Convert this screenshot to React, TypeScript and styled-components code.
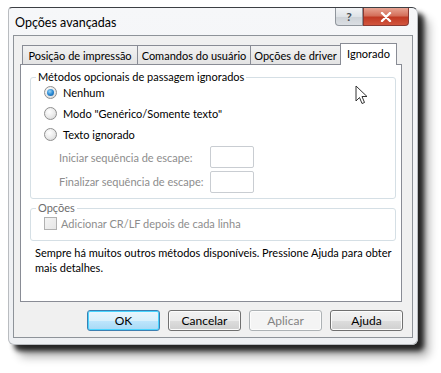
import React from "react";
import styled, { createGlobalStyle } from "styled-components";

const Global = createGlobalStyle`
  html, body { margin: 0; padding: 0; background: #ffffff; }
  body { font-family: Lato, "Noto Sans", sans-serif; font-size: 11px; color: #000; }
  * { box-sizing: border-box; }
`;

const Page = styled.div`
  width: 441px;
  height: 373px;
  padding: 7px 0 0 8px;
  position: relative;
  overflow: hidden;
`;

const Window = styled.div`
  width: 410px;
  height: 338px;
  background: linear-gradient(#f6f7f9, #eef0f3);
  border: 1px solid #b9bcc0;
  border-top: 1px solid #3c3f44;
  border-radius: 4px 6px 6px 6px;
  box-shadow: 6px 6px 5px rgba(0, 0, 0, 0.8), 11px 12px 10px rgba(0, 0, 0, 0.3);
  display: flex;
  flex-direction: column;
`;

const TitleBar = styled.div`
  height: 27px;
  display: flex;
  align-items: flex-start;
  justify-content: space-between;
  padding-left: 6px;
`;

const Title = styled.div`
  font-size: 12.5px;
  padding-top: 7px;
  color: #000;
`;

const Controls = styled.div`
  display: flex;
  margin-right: 8px;
`;

const CtlButton = styled.div<{ $close?: boolean }>`
  width: ${(p) => (p.$close ? 46 : 28)}px;
  height: 18px;
  display: flex;
  align-items: center;
  justify-content: center;
  border: 1px solid ${(p) => (p.$close ? "#8a3a33" : "#8f959c")};
  border-top: none;
  border-radius: ${(p) => (p.$close ? "0 0 4px 0" : "0 0 0 4px")};
  background: ${(p) =>
    p.$close
      ? "linear-gradient(#e8a493 0%, #d4705b 45%, #c13a24 55%, #d2553e 100%)"
      : "linear-gradient(#f2f4f6 0%, #dfe3e7 50%, #cdd2d7 51%, #dadee3 100%)"};
  color: ${(p) => (p.$close ? "#fff" : "#4a4f55")};
  font-size: 12px;
  font-weight: bold;
`;

const Client = styled.div`
  margin: 0 4px 6px 4px;
  flex: 1;
  background: #f0f0f0;
  border: 1px solid #8e9399;
  display: flex;
  flex-direction: column;
`;

const TabArea = styled.div`
  padding: 6px 10px 0 6px;
`;

const TabStrip = styled.div`
  display: flex;
  align-items: flex-end;
  height: 22px;
  padding-left: 3px;
`;

const Tab = styled.div<{ $w: number; $active?: boolean }>`
  width: ${(p) => p.$w}px;
  height: ${(p) => (p.$active ? 22 : 19)}px;
  display: flex;
  align-items: center;
  justify-content: center;
  border: 1px solid #898c95;
  border-bottom: none;
  margin-left: -1px;
  background: ${(p) => (p.$active ? "#ffffff" : "linear-gradient(#f2f2f2, #e3e3e3)")};
  position: relative;
  z-index: ${(p) => (p.$active ? 2 : 1)};
  margin-bottom: ${(p) => (p.$active ? -1 : 0)}px;
  padding-bottom: ${(p) => (p.$active ? 3 : 0)}px;
  white-space: nowrap;
`;

const TabPage = styled.div`
  height: 238px;
  background: #ffffff;
  border: 1px solid #898c95;
  padding: 6px 5px 0 9px;
  position: relative;
`;

const Group = styled.fieldset<{ $h: number }>`
  margin: 0;
  padding: 0 0 0 13px;
  height: ${(p) => p.$h}px;
  border: 1px solid #d5dfe5;
  border-radius: 3px;
  min-width: 0;
`;

const Legend = styled.legend<{ $disabled?: boolean }>`
  padding: 0 2px;
  margin-left: -8px;
  color: ${(p) => (p.$disabled ? "#6d6d6d" : "#000")};
  line-height: 12px;
`;

const Row = styled.div<{ $h: number; $indent?: number }>`
  height: ${(p) => p.$h}px;
  display: flex;
  align-items: center;
  padding-left: ${(p) => p.$indent || 0}px;
`;

const Radio = styled.span<{ $checked?: boolean }>`
  width: 13px;
  height: 13px;
  border-radius: 50%;
  border: 1px solid #8f8f8f;
  background: radial-gradient(circle at 40% 35%, #ffffff 0%, #e9e9e9 55%, #cfcfcf 100%);
  display: inline-flex;
  align-items: center;
  justify-content: center;
  margin-right: 6px;
  &::after {
    content: "";
    display: ${(p) => (p.$checked ? "block" : "none")};
    width: 7px;
    height: 7px;
    border-radius: 50%;
    background: radial-gradient(circle at 40% 35%, #9ad3f5 0%, #2a8ad4 50%, #10559a 100%);
  }
`;

const Check = styled.span`
  width: 13px;
  height: 13px;
  border: 1px solid #b1b1b1;
  background: linear-gradient(135deg, #f4f4f4, #e6e6e6);
  margin-right: 4px;
`;

const Label = styled.span<{ $disabled?: boolean }>`
  color: ${(p) => (p.$disabled ? "#8d8d8d" : "#000")};
  white-space: nowrap;
`;

const EscLabel = styled(Label)`
  width: 151px;
`;

const Input = styled.span`
  width: 44px;
  height: 22px;
  border: 1px solid #c9cdd2;
  border-radius: 2px;
  background: #fff;
`;

const Spacer = styled.div<{ $h: number }>`
  height: ${(p) => p.$h}px;
`;

const Note = styled.div`
  padding-left: 5px;
  line-height: 15px;
  width: 370px;
`;

const ButtonRow = styled.div`
  display: flex;
  justify-content: flex-end;
  gap: 8px;
  padding: 8px 9px 0 0;
`;

const Button = styled.div<{ $default?: boolean; $disabled?: boolean }>`
  width: 73px;
  height: 21px;
  display: flex;
  align-items: center;
  justify-content: center;
  border-radius: 3px;
  font-size: 12px;
  border: 1px solid ${(p) => (p.$default ? "#3c7fb1" : p.$disabled ? "#adb2b5" : "#707070")};
  background: ${(p) =>
    p.$disabled
      ? "#f4f4f4"
      : p.$default
      ? "linear-gradient(#eaf6fd 0%, #d9f0fc 50%, #bee6fd 51%, #a7d9f5 100%)"
      : "linear-gradient(#f2f2f2 0%, #ebebeb 50%, #dddddd 51%, #cfcfcf 100%)"};
  box-shadow: ${(p) => (p.$default ? "inset 0 0 0 1px #48d4ff" : "inset 0 0 0 1px #fcfcfc")};
  color: ${(p) => (p.$disabled ? "#838383" : "#000")};
`;

const Cursor = styled.svg`
  position: absolute;
  left: 334px;
  top: 20px;
`;

export default function App() {
  return (
    <>
      <Global />
      <Page>
        <Window>
          <TitleBar>
            <Title>Opções avançadas</Title>
            <Controls>
              <CtlButton>?</CtlButton>
              <CtlButton $close>
                <svg width="12" height="10" viewBox="0 0 12 10">
                  <path d="M2 1 L10 9 M10 1 L2 9" stroke="#fff" strokeWidth="2.4" strokeLinecap="round" />
                </svg>
              </CtlButton>
            </Controls>
          </TitleBar>
          <Client>
            <TabArea>
              <TabStrip>
                <Tab $w={116}>Posição de impressão</Tab>
                <Tab $w={114}>Comandos do usuário</Tab>
                <Tab $w={91}>Opções de driver</Tab>
                <Tab $w={57} $active>Ignorado</Tab>
              </TabStrip>
              <TabPage>
                <Group $h={128}>
                  <Legend>Métodos opcionais de passagem ignorados</Legend>
                  <Row $h={19}>
                    <Radio $checked />
                    <Label>Nenhum</Label>
                  </Row>
                  <Row $h={22}>
                    <Radio />
                    <Label>Modo "Genérico/Somente texto"</Label>
                  </Row>
                  <Row $h={21}>
                    <Radio />
                    <Label>Texto ignorado</Label>
                  </Row>
                  <Row $h={24} $indent={15}>
                    <EscLabel $disabled>Iniciar sequência de escape:</EscLabel>
                    <Input />
                  </Row>
                  <Row $h={25} $indent={15}>
                    <EscLabel $disabled>Finalizar sequência de escape:</EscLabel>
                    <Input />
                  </Row>
                </Group>
                <Spacer $h={3} />
                <Group $h={39}>
                  <Legend $disabled>Opções</Legend>
                  <Row $h={18}>
                    <Check />
                    <Label $disabled>Adicionar CR/LF depois de cada linha</Label>
                  </Row>
                </Group>
                <Spacer $h={4} />
                <Note>Sempre há muitos outros métodos disponíveis. Pressione Ajuda para obter mais detalhes.</Note>
                <Cursor width="13" height="20" viewBox="0 0 13 20">
                  <path d="M1 1 L1 16 L4.5 12.5 L7 18.5 L9.5 17.5 L7 11.5 L12 11.5 Z" fill="#fff" stroke="#333" strokeWidth="1" strokeLinejoin="round" />
                </Cursor>
              </TabPage>
            </TabArea>
            <ButtonRow>
              <Button $default>OK</Button>
              <Button>Cancelar</Button>
              <Button $disabled>Aplicar</Button>
              <Button>Ajuda</Button>
            </ButtonRow>
          </Client>
        </Window>
      </Page>
    </>
  );
}
